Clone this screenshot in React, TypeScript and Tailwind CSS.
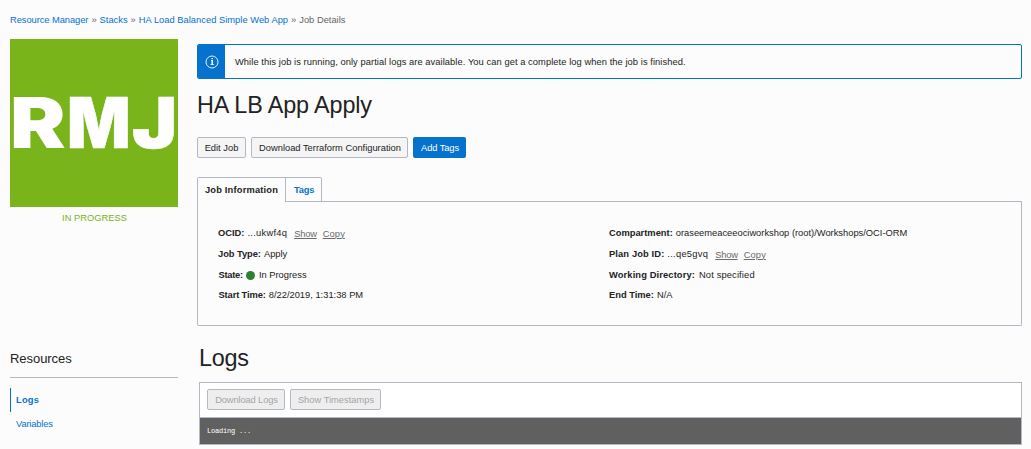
import type { ReactNode } from "react";

function Field({ label, labelClass, children }: { label: string; labelClass?: string; children: ReactNode }) {
  return (
    <div className="flex h-[21px] items-center whitespace-pre">
      <span className={"font-bold " + (labelClass ?? "")}>{label}:</span>
      {children}
    </div>
  );
}

function IdValue({ value }: { value: string }) {
  return (
    <>
      <span className="ml-[3px] tracking-[0.27px]">{value}</span>
      <a className="relative top-px ml-[7px] tracking-[-0.2px] text-[#6b6b6b] underline underline-offset-1">Show</a>
      <a className="relative top-px ml-[6px] tracking-[0.1px] text-[#6b6b6b] underline underline-offset-1">Copy</a>
    </>
  );
}

export default function App() {
  return (
    <div className="h-[449px] w-[1031px] overflow-hidden bg-[#fcfcfc] pl-[10px] pr-[9px] font-['Liberation_Sans',Arial,sans-serif] text-[9.33px] text-[#222]">
      <nav className="flex h-[39px] items-center gap-[3px] pt-[2px] whitespace-nowrap text-[#0572ce]">
        <a className="tracking-[-0.06px]">Resource Manager</a>
        <span className="text-[#666]">»</span>
        <a>Stacks</a>
        <span className="text-[#666]">»</span>
        <a className="tracking-[0.02px]">HA Load Balanced Simple Web App</a>
        <span className="text-[#666]">»</span>
        <span className="text-[#666]">Job Details</span>
      </nav>
      <div className="flex gap-[19px]">
        <aside className="w-[168px] shrink-0">
          <div className="flex h-[168px] items-center overflow-hidden bg-[#78b41a] font-['Inter',sans-serif] text-[70px] leading-none font-black text-white">
            <span className="flex">
              <span className="w-[57px] origin-left scale-x-[1.19]">R</span>
              <span className="w-[65px] origin-left scale-x-[0.95] [-webkit-text-stroke:0.6px_white]">M</span>
              <span className="origin-left scale-x-[1.08] [-webkit-text-stroke:0.6px_white]">J</span>
            </span>
          </div>
          <div className="flex h-[23px] items-center justify-center pt-px pl-px text-[#78b41a]">IN PROGRESS</div>
          <h2 className="mt-[113px] flex h-[35px] items-center border-b border-[#b3b8c3] pb-[3px] text-[13px] tracking-[-0.05px]">Resources</h2>
          <div className="mt-[10px] flex h-6 items-center border-l border-[#0572ce] pt-px pl-[5px] font-bold tracking-[0.2px] text-[#0572ce]">Logs</div>
          <div className="flex h-6 items-center pt-[2px] pl-[6px] tracking-[-0.15px] text-[#0572ce]">Variables</div>
        </aside>
        <main className="w-[825px] shrink-0 pt-[5px]">
          <div className="flex h-[35px] overflow-hidden rounded-[2px] border border-[#0572ce]">
            <div className="flex w-[27px] shrink-0 items-center justify-center bg-[#0572ce]">
              <svg width="14" height="14" viewBox="0 0 14 14" fill="none" stroke="white">
                <circle cx="7" cy="7" r="6" strokeWidth="0.9" />
                <path d="M6 5.5H7.5M5.5 9.5H9" strokeWidth="0.8" />
                <path d="M7.25 5.2V9.8M7.25 3V4.3" strokeWidth="1.5" />
              </svg>
            </div>
            <p className="flex items-center pt-[2px] pl-[10px] tracking-[0.065px]">While this job is running, only partial logs are available. You can get a complete log when the job is finished.</p>
          </div>
          <h1 className="mt-[10px] h-[32px] text-[23.4px] leading-[32px] tracking-[-0.13px]">HA LB App Apply</h1>
          <div className="mt-4 flex h-[21px] gap-[5px] whitespace-nowrap">
            <button className="flex w-[49px] items-center justify-center rounded-[2px] border border-[#b3b8c3] bg-[#f5f5f5] pt-[2px]">Edit Job</button>
            <button className="flex w-[157px] items-center justify-center rounded-[2px] border border-[#b3b8c3] bg-[#f5f5f5] pt-[2px] pl-px">Download Terraform Configuration</button>
            <button className="flex w-[53px] items-center justify-center rounded-[2px] bg-[#0572ce] pt-[2px] pl-px tracking-[-0.1px] text-white">Add Tags</button>
          </div>
          <div className="mt-[19px] flex h-[25px] font-bold">
            <div className="w-[89px] rounded-tl-[2px] border-t border-r border-l border-[#b3b8c3] pt-[6px] pl-[7px] tracking-[0.17px]">Job Information</div>
            <div className="w-[36px] rounded-tr-[2px] border-t border-r border-b border-[#b3b8c3] pt-[6px] pl-[8px] tracking-[-0.25px] text-[#0572ce]">Tags</div>
            <div className="grow border-b border-[#b3b8c3]" />
          </div>
          <section className="flex h-[124px] rounded-b-[2px] border-r border-b border-l border-[#b3b8c3] pt-[21px] pl-[20px]">
            <div className="w-[391px]">
              <Field label="OCID"><IdValue value="...ukwf4q" /></Field>
              <Field label="Job Type" labelClass="tracking-[-0.05px]"><span className="ml-[3px]">Apply</span></Field>
              <Field label="State" labelClass="pl-[0.5px] tracking-[-0.25px]">
                <span className="ml-[3px] h-[9px] w-[9px] rounded-full bg-[#2f8132]" />
                <span className="ml-[4px]">In Progress</span>
              </Field>
              <div className="-mt-px">
                <Field label="Start Time" labelClass="pl-[0.5px] tracking-[-0.12px]"><span className="ml-[3px]">8/22/2019, 1:31:38 PM</span></Field>
              </div>
            </div>
            <div>
              <Field label="Compartment"><span className="ml-[3px]">oraseemeaceeociworkshop (root)/Workshops/OCI-ORM</span></Field>
              <Field label="Plan Job ID" labelClass="tracking-[0.12px]"><IdValue value="...qe5gvq" /></Field>
              <Field label="Working Directory" labelClass="tracking-[0.12px]"><span className="ml-[4px] tracking-[0.14px]">Not specified</span></Field>
              <div className="-mt-px">
                <Field label="End Time"><span className="ml-[3px]">N/A</span></Field>
              </div>
            </div>
          </section>
          <section className="pt-4 pl-[2px]">
            <h2 className="h-[32px] text-[23.4px] leading-[32px] tracking-[-0.3px]">Logs</h2>
            <div className="mt-2 border border-[#b3b8c3] bg-white">
              <div className="flex h-[35px] gap-[5px] border-b border-[#b3b8c3] pt-[6px] pl-[7px] whitespace-nowrap text-[#a5a5a5]">
                <button className="flex h-[21px] w-[78px] items-center justify-center rounded-[2px] border border-[#b3b8c3] bg-[#eee] pt-[2px] pl-px tracking-[-0.13px]">Download Logs</button>
                <button className="flex h-[21px] w-[91px] items-center justify-center rounded-[2px] border border-[#b3b8c3] bg-[#eee] pt-[2px] pl-px">Show Timestamps</button>
              </div>
              <div className="flex h-[26px] items-center bg-[#606060] pl-[7px] font-['Liberation_Mono',monospace] text-[7px] tracking-[-0.2px] whitespace-pre text-white">Loading ...</div>
            </div>
          </section>
        </main>
      </div>
    </div>
  );
}
